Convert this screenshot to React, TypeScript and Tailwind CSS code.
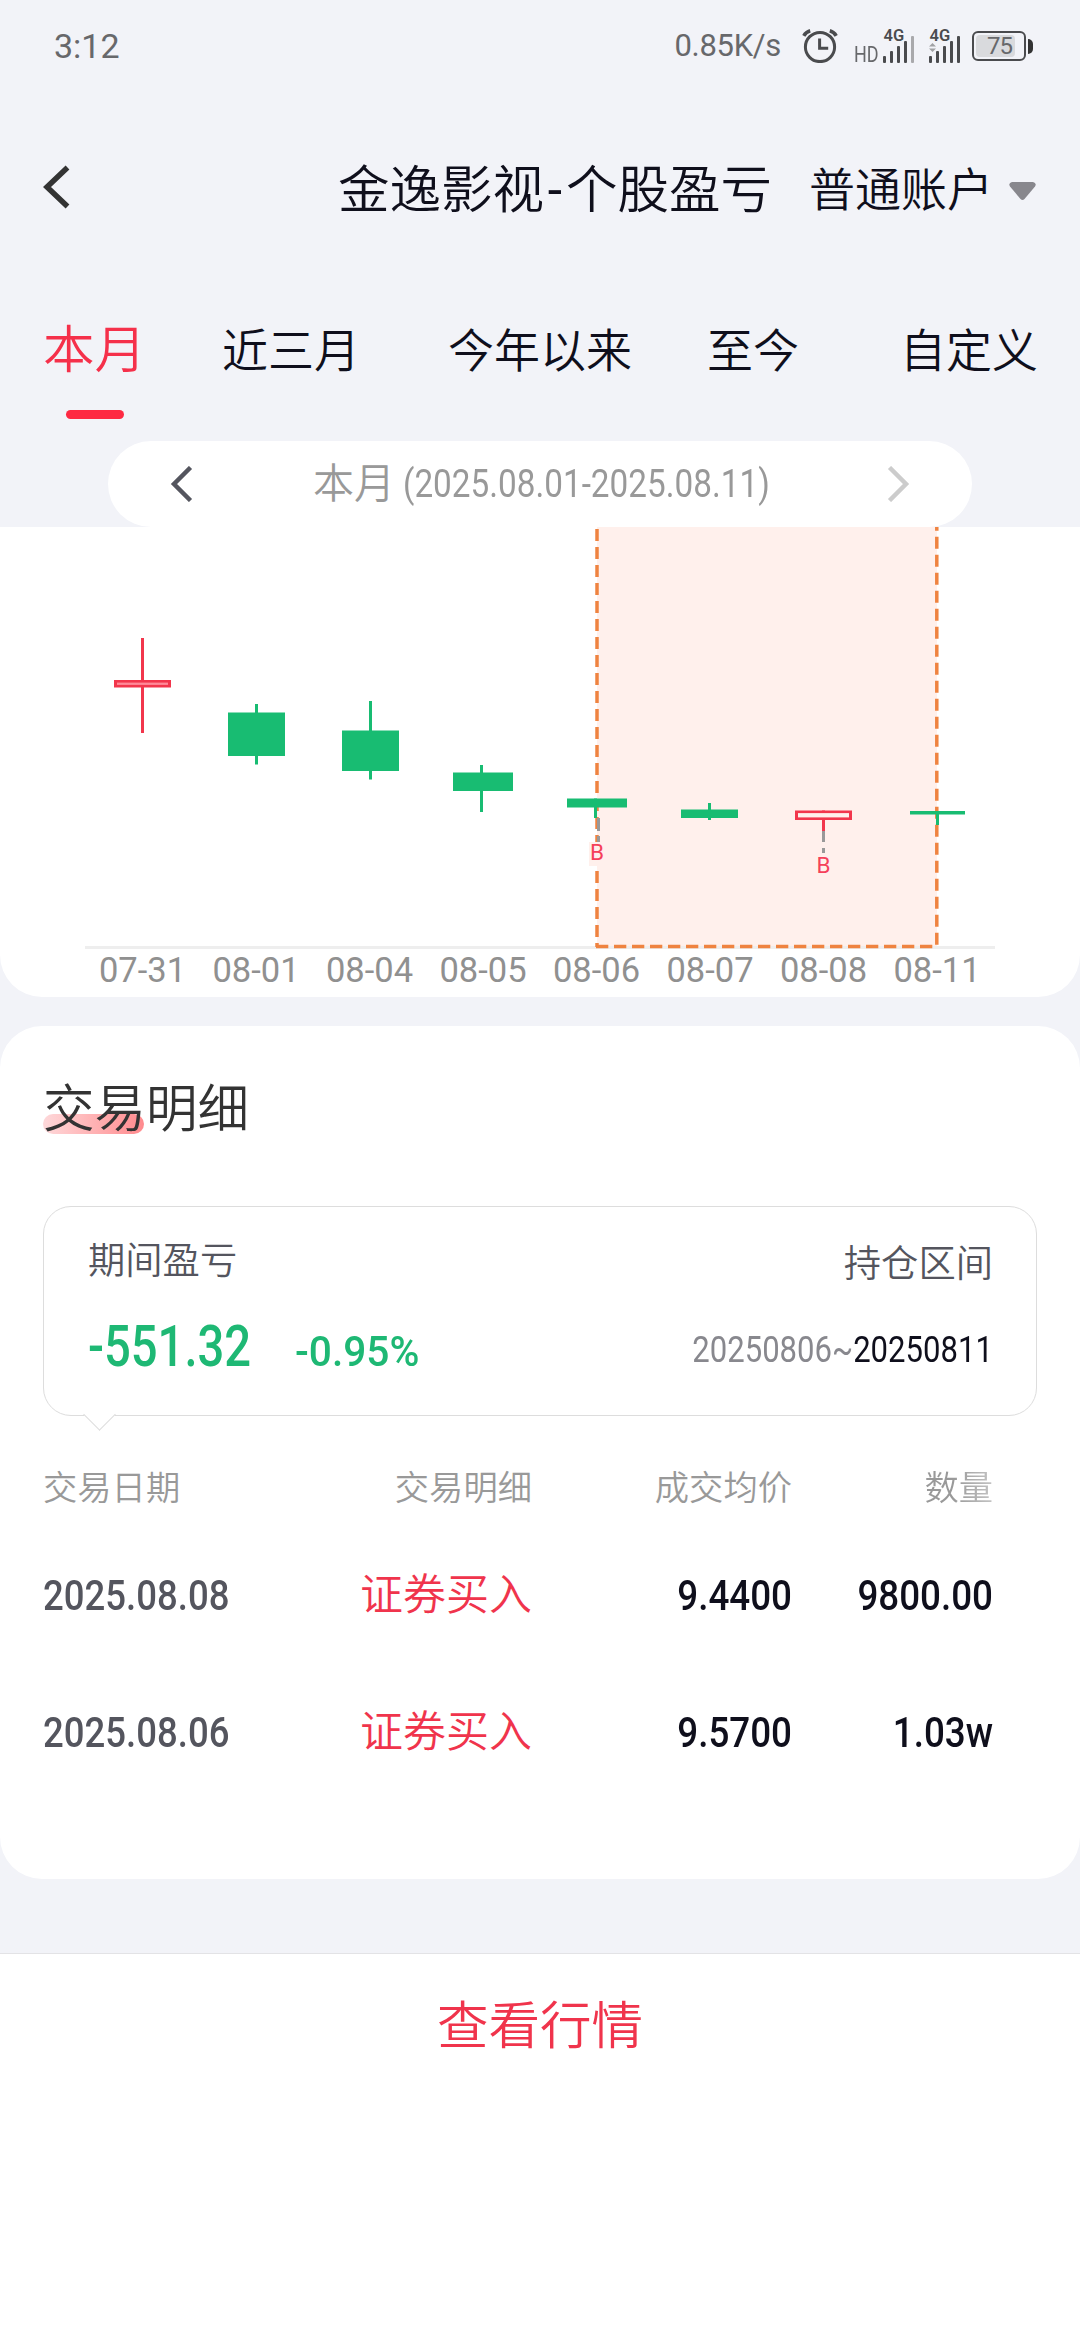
import type { ReactNode } from "react"
import clsx from "clsx"

const tabs = [
  { label: "本月", className: "text-[51.5px] text-[#f5304a]", active: true },
  { label: "近三月", className: "ml-[76px] text-[46px]" },
  { label: "今年以来", className: "ml-[88px] text-[46px]" },
  { label: "至今", className: "ml-[75px] text-[46px]" },
  { label: "自定义", className: "ml-[101px] text-[46px]" },
]

const candles = [
  { date: "07-31", x: 142.5, left: 114, right: 171, top: 680, bottom: 687.5, high: 638, low: 733, up: true, fill: "#ff8a98" },
  { date: "08-01", x: 256.5, left: 228, right: 285, top: 712.5, bottom: 756, high: 704, low: 764.5 },
  { date: "08-04", x: 370.5, left: 342, right: 399, top: 730.5, bottom: 771, high: 701, low: 779.5 },
  { date: "08-05", x: 481.5, left: 453, right: 513, top: 772.5, bottom: 791, high: 765, low: 812 },
  { date: "08-06", x: 595.5, left: 567, right: 627, top: 798.5, bottom: 807.5, high: 798.5, low: 818 },
  { date: "08-07", x: 709.5, left: 681, right: 738, top: 809.5, bottom: 818, high: 803, low: 820 },
  { date: "08-08", x: 823.5, left: 795, right: 852, top: 810.5, bottom: 820, high: 810.5, low: 831, up: true, fill: "#fff0ec" },
  { date: "08-11", x: 937.5, left: 910, right: 965, top: 811, bottom: 814.5, high: 811, low: 825 },
]

const trades = [
  { date: "2025.08.08", type: "证券买入", price: "9.4400", amount: "9800.00" },
  { date: "2025.08.06", type: "证券买入", price: "9.5700", amount: "1.03w" },
]

// digits are set narrower than the body face
function Num({ children, className }: { children: ReactNode; className?: string }) {
  return <span className={clsx("inline-block whitespace-nowrap", className)}>{children}</span>
}

function AlarmIcon() {
  return (
    <svg className="ml-[21px] h-[34px] w-[36px]" viewBox="0 0 36 34" fill="none" stroke="#4a4b4e">
      <circle cx="18" cy="18" r="14.6" strokeWidth="3" />
      <path d="M17.6 9.5v9.8h8.6" strokeWidth="3" />
      <path d="M1.8 6.8Q4 3 8.2 1.8M27.8 1.8Q32 3 34.2 6.8" strokeWidth="3.6" />
    </svg>
  )
}

function Signal({ weak, data }: { weak?: boolean; data?: boolean }) {
  return (
    <svg className="h-[42px] w-[32px]" viewBox="0 -6 32 42" fill="#4a4b4e">
      <text x="0.5" y="13" fontSize="16.5" fontWeight="600">4G</text>
      <rect x="0" y="28" width="3" height="7" rx="1" />
      <rect x="7" y="23" width="3" height="12" rx="1" />
      <rect x="14" y="18" width="3" height="17" rx="1" />
      <rect x="21" y="13" width="3" height="22" rx="1" />
      <rect x="28" y="8" width="3" height="27" rx="1" fill={weak ? "#a9a9ac" : "#4a4b4e"} />
      {data && <path d="M0 18.5 3.5 15 7 18.5zM0 20.5h7L3.5 24z" fill="#a0a1a4" />}
    </svg>
  )
}

function StatusBar() {
  return (
    <div className="flex h-[92px] items-center pl-[54px] pr-[47px] font-normal text-[#67686b]">
      <span className="text-[34px]">3:12</span>
      <span className="ml-auto text-[31px] tracking-[-0.3px]">0.85K/s</span>
      <AlarmIcon />
      <div className="mb-[6px] ml-[16px] flex h-[42px] items-end">
        <span className="w-[29px] origin-left scale-x-[.8] text-[22.5px] leading-[20px]">HD</span>
        <Signal weak />
        <span className="w-[14px]" />
        <Signal data />
      </div>
      <div className="ml-[11px] flex items-center">
        <div className="flex h-[30px] w-[54px] rounded-[6px] border-2 border-[#4a4b4e] p-[2px]">
          <div className="flex w-[39px] items-center justify-end rounded-[4px] bg-[#d9dadd] pr-[3px] text-[24px] leading-none tracking-[-1px]">
            75
          </div>
        </div>
        <div className="ml-[2px] h-[15px] w-[5px] rounded-r-full bg-[#333]" />
      </div>
    </div>
  )
}

function Header() {
  return (
    <header className="flex h-[197px] items-center pl-[42px] pr-[44px] text-[#0f0f1c]">
      <svg className="mt-[-8px] h-[44px] w-[30px]" viewBox="0 0 30 44" fill="none" stroke="#333" strokeWidth="5.5">
        <path d="M25.5 2.5 5 22l20.5 19.5" />
      </svg>
      <h1 className="ml-auto text-[51.5px]">
        金逸影视<span className="inline-block w-[22px] text-center font-normal">-</span>个股盈亏
      </h1>
      <div className="ml-[37px] mt-[-1px] text-[46px]">普通账户</div>
      <svg className="ml-[16px] h-[20px] w-[27px]" viewBox="0 0 27 20" fill="#88878d">
        <path d="M3 1h21q4 1 2 4.5L15.5 18q-2 2-4 0L1 5.5Q-1 2 3 1z" />
      </svg>
    </header>
  )
}

function Tabs() {
  return (
    <nav className="flex h-[152px] pl-[43px] pt-[30px] leading-[64px] text-[#0f0f1c]">
      {tabs.map((tab) => (
        <div key={tab.label} className={clsx("relative shrink-0", tab.className)}>
          {tab.label}
          {tab.active && (
            <span className="absolute left-[23px] top-[91px] h-[9px] w-[58px] rounded-full bg-[#fe2942]" />
          )}
        </div>
      ))}
    </nav>
  )
}

function RangePicker() {
  return (
    <div className="mx-[108px] flex h-[86px] items-center rounded-full bg-white px-[62px]">
      <svg className="h-[36px] w-[23px]" viewBox="0 0 23 36" fill="none" stroke="#54555e" strokeWidth="4.5">
        <path d="M20.5 1.5 4 18l16.5 16.5" />
      </svg>
      <div className="ml-[120px] flex w-[456px] whitespace-nowrap leading-[60px] text-[#999]">
        <span className="mt-[-1px] text-[41px]">本月</span>
        <Num className="ml-[8px] mt-[-1px] origin-left scale-x-[.843] text-[39.5px] font-normal">(2025.08.01-2025.08.11)</Num>
      </div>
      <svg className="ml-auto h-[36px] w-[23px]" viewBox="0 0 23 36" fill="none" stroke="#ccc" strokeWidth="4.5">
        <path d="M2.5 1.5 19 18 2.5 34.5" />
      </svg>
    </div>
  )
}

function BuyMark({ x, y }: { x: number; y: number }) {
  return (
    <text x={x} y={y} textAnchor="middle" fontSize="22.5" fill="#f5405a">
      B
    </text>
  )
}

function CandleChart() {
  return (
    <svg className="block h-[470px] w-[1080px] font-normal" viewBox="0 527 1080 470">
      <rect x="597" y="527" width="340" height="420" fill="#fff0ec" />
      <path d="M85 947.5H995" stroke="#eee" strokeWidth="3" />
      <g stroke="#ef8340" strokeWidth="3.5" strokeDasharray="12 6">
        <path d="M597 529V947" />
        <path d="M596 946.5H937" strokeDasharray="12.3 5.7" />
        <path d="M936.8 518.7V946" />
      </g>
      {candles.map((c) => {
        const color = c.up ? "#f2364c" : "#18bc72"
        return (
          <g key={c.date} fill={color}>
            <rect x={c.x - 1.5} y={c.high} width="3" height={c.low - c.high} />
            <rect x={c.left} y={c.top} width={c.right - c.left} height={c.bottom - c.top} />
            {c.up && (
              <rect x={c.left + 3} y={c.top + 2.6} width={c.right - c.left - 6} height={c.bottom - c.top - 5.2} fill={c.fill} />
            )}
          </g>
        )
      })}
      <path d="M598.5 818v13M598.5 836v6M823.5 831v11M823.5 848v5" stroke="#999" strokeWidth="3" />
      <rect x="589" y="842" width="14" height="24" fill="#fff0ec" />
      <BuyMark x={597} y={860} />
      <BuyMark x={823.5} y={872.5} />
      {candles.map((c, i) => (
        <text key={c.date} x={142.5 + i * 113.5} y="981.5" textAnchor="middle" fontSize="34.5" fill="#909090">
          {c.date}
        </text>
      ))}
    </svg>
  )
}

function Summary() {
  return (
    <div className="relative mx-[43px] mt-[64px] flex h-[210px] justify-between rounded-[28px] border border-[#ddd] px-[44px]">
      <div>
        <div className="mt-[28px] text-[37.3px] leading-[52px] text-[#54555e]">期间盈亏</div>
        <div className="mt-[22px] flex items-baseline font-medium leading-[76px] text-[#1eb874]">
          <Num className="w-[207px] origin-left scale-x-[.82] text-[57.5px]">-551.32</Num>
          <Num className="origin-left scale-x-[.945] text-[43px]">-0.95%</Num>
        </div>
      </div>
      <div className="mr-[-1px] text-right">
        <div className="mt-[31px] text-[37.3px] leading-[52px] text-[#54555e]">持仓区间</div>
        <Num className="mt-[30px] origin-right scale-x-[.84] text-[37px] font-normal leading-[60px] text-[#88888e]">
          20250806~<span className="text-[#0f0f1c]">20250811</span>
        </Num>
      </div>
      <span className="absolute left-[44px] top-[196px] size-[23px] rotate-45 border-b border-r border-[#ddd] bg-white" />
    </div>
  )
}

function TradeTable() {
  return (
    <div className="px-[43px]">
      <div className="mb-[37px] mt-[44px] grid h-[56px] grid-cols-[200px_289px_260px_201px] text-[34.3px] leading-[56px] text-[#999]">
        <span>交易日期</span>
        <span className="text-right">交易明细</span>
        <span className="text-right">成交均价</span>
        <span className="bg-linear-to-r from-[#999] from-80% to-[#c4c4c4] bg-clip-text text-right text-transparent">数量</span>
      </div>
      {trades.map((t) => (
        <div
          key={t.date}
          className="mb-[53px] grid h-[84px] grid-cols-[200px_289px_260px_201px] text-[43px] leading-[84px] text-[#0f0f1c]"
        >
          <Num className="origin-left scale-x-[.85] font-medium text-[#54555e]">{t.date}</Num>
          <span className="text-right text-[#f0344c]">{t.type}</span>
          <Num className="origin-right scale-x-[.855] text-right font-medium">{t.price}</Num>
          <Num className="origin-right scale-x-[.855] text-right font-medium">{t.amount}</Num>
        </div>
      ))}
    </div>
  )
}

export default function App() {
  return (
    <div className="flex h-[2340px] w-[1080px] flex-col overflow-hidden bg-[#f2f3f8] font-['Roboto','Noto_Sans_CJK_SC',sans-serif] font-[350]">
      <StatusBar />
      <Header />
      <Tabs />
      <RangePicker />
      <section className="h-[470px] overflow-hidden rounded-b-[42px] bg-white">
        <CandleChart />
      </section>
      <section className="mt-[29px] h-[853px] rounded-[42px] bg-white">
        <h2 className="relative ml-[43px] mt-[52px] w-fit text-[51.5px] leading-[64px] text-[#333]">
          <span className="absolute left-0 top-[36px] h-[20px] w-[101px] rounded-full bg-linear-to-r from-[#fdd8da] to-[#ff8a8e]" />
          <span className="relative">交易明细</span>
        </h2>
        <Summary />
        <TradeTable />
      </section>
      <footer className="mt-[74px] flex-1 border-t border-[#e3e3e6] bg-white pt-[41px] text-center text-[51.5px] leading-[64px] text-[#f0344c]">
        查看行情
      </footer>
    </div>
  )
}
